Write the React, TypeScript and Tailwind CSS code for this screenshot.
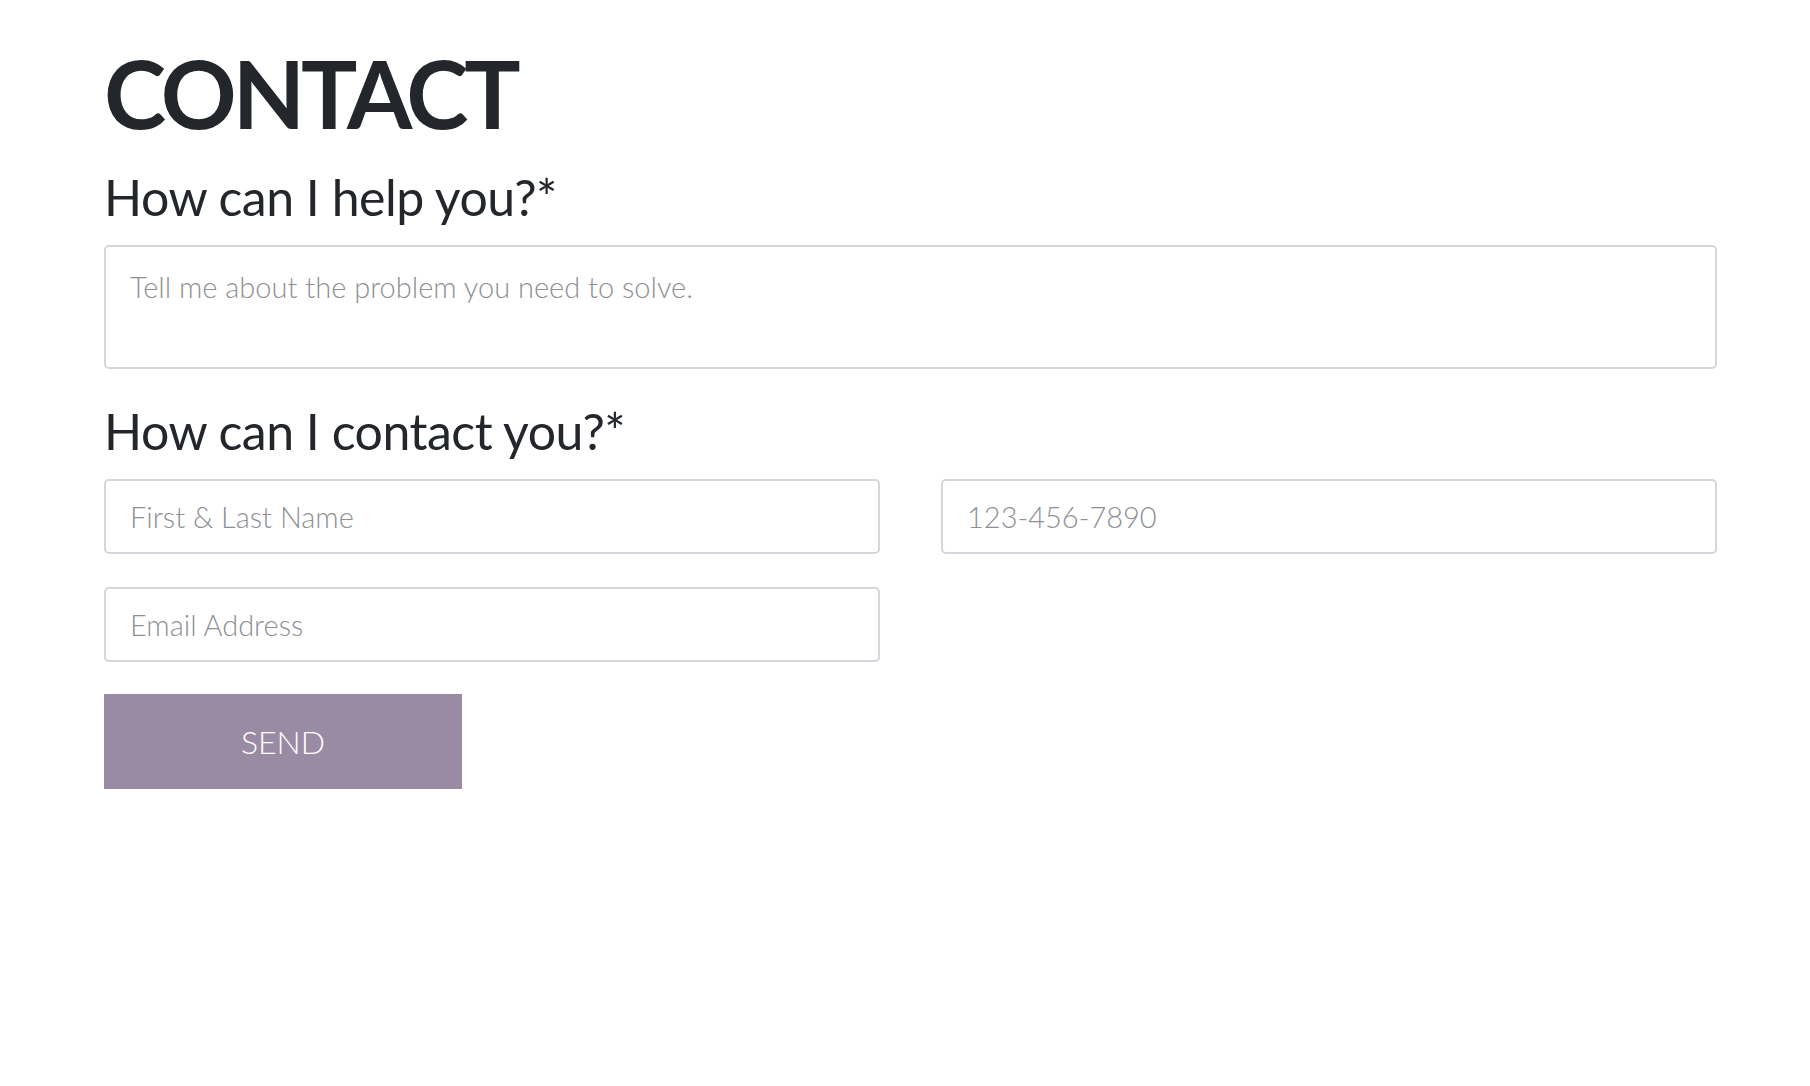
import React from 'react';

const font = { fontFamily: 'Lato, "Open Sans", sans-serif' };

const fieldClass =
  'h-[75px] rounded-[5px] border-2 border-[#d3d6da] px-[24px] text-[29px] font-light outline-none placeholder:text-[#8d9196]';

export default function App() {
  return (
    <div className="min-h-screen bg-white text-[#23272b]" style={font}>
      <div className="pl-[104px] pr-[93px] pt-[46px]">
        <h1 className="text-[94px] font-bold leading-none tracking-[-4px]">CONTACT</h1>

        <form className="mt-[32px] flex flex-col" onSubmit={(e) => e.preventDefault()}>
          <label className="text-[50px] leading-none tracking-[-0.5px]">How can I help you?*</label>
          <textarea
            placeholder="Tell me about the problem you need to solve."
            className="mt-[23px] h-[124px] w-full resize-none rounded-[5px] border-2 border-[#d3d6da] px-[24px] py-[18px] text-[29px] font-light outline-none placeholder:text-[#8d9196]"
          />

          <label className="mt-[37px] text-[50px] leading-none tracking-[-0.5px]">How can I contact you?*</label>
          <div className="mt-[23px] grid grid-cols-2 gap-x-[61px] gap-y-[33px]">
            <input placeholder="First & Last Name" className={fieldClass} />
            <input placeholder="123-456-7890" className={fieldClass} />
            <input placeholder="Email Address" className={fieldClass} />
          </div>

          <button
            type="submit"
            className="mt-[32px] h-[95px] w-[358px] bg-[#9a8ba4] text-[32px] font-light text-white"
          >
            SEND
          </button>
        </form>
      </div>
    </div>
  );
}
